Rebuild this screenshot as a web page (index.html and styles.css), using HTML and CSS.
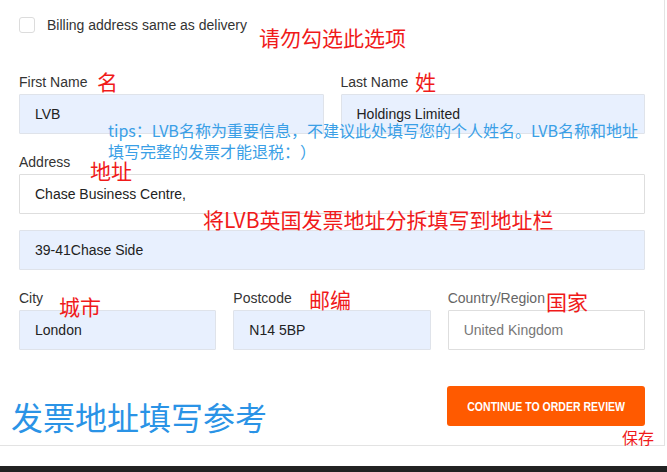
FILE: index.html
```html
<!DOCTYPE html>
<html lang="zh-CN">
<head>
<meta charset="utf-8">
<title>Billing address</title>
<link rel="stylesheet" href="styles.css">
</head>
<body>
<div class="page">
  <form class="card">
    <label class="check-row">
      <span class="checkbox"></span>
      <span class="check-text">Billing address same as delivery</span>
    </label>

    <div class="row two">
      <div class="field">
        <div class="label">First Name</div>
        <div class="input filled">LVB</div>
      </div>
      <div class="field">
        <div class="label">Last Name</div>
        <div class="input filled">Holdings Limited</div>
      </div>
    </div>

    <div class="field">
      <div class="label">Address</div>
      <div class="input">Chase Business Centre,</div>
    </div>
    <div class="field gap-small">
      <div class="input filled">39-41Chase Side</div>
    </div>

    <div class="row three">
      <div class="field">
        <div class="label">City</div>
        <div class="input filled">London</div>
      </div>
      <div class="field">
        <div class="label">Postcode</div>
        <div class="input filled">N14 5BP</div>
      </div>
      <div class="field">
        <div class="label muted">Country/Region</div>
        <div class="input muted-text">United Kingdom</div>
      </div>
    </div>

    <div class="actions">
      <button type="button" class="btn"><span class="btn-text">CONTINUE TO ORDER REVIEW</span></button>
    </div>
  </form>
  <div class="footer"></div>

  <div class="note red n-nocheck">请勿勾选此选项</div>
  <div class="note red n-first">名</div>
  <div class="note red n-last">姓</div>
  <div class="note blue-tip n-tips">tips：LVB名称为重要信息，不建议此处填写您的个人姓名。LVB名称和地址<br>填写完整的发票才能退税：）</div>
  <div class="note red n-addr">地址</div>
  <div class="note red n-split">将LVB英国发票地址分拆填写到地址栏</div>
  <div class="note red n-city">城市</div>
  <div class="note red n-post">邮编</div>
  <div class="note red n-country">国家</div>
  <div class="note blue-big n-ref">发票地址填写参考</div>
  <div class="note red n-save">保存</div>
</div>
</body>
</html>
```
FILE: styles.css
```css
* { box-sizing: border-box; }
html, body { margin: 0; padding: 0; background: #fff; }
body {
  font-family: "Liberation Sans", Arial, sans-serif;
  color: #333;
  width: 667px;
  height: 472px;
  overflow: hidden;
}
.page { position: relative; width: 667px; height: 472px; }

.card {
  width: 665px;
  border-right: 1px solid #e3e3e3;
  border-bottom: 1px solid #e3e3e3;
  padding: 17px 19px 19px 19px;
  display: flex;
  flex-direction: column;
}

.check-row {
  display: flex;
  align-items: center;
  height: 16px;
  margin-bottom: 41px;
}
.checkbox {
  width: 16px;
  height: 16px;
  border: 1px solid #dcdcdc;
  border-radius: 3px;
  background: #fff;
  margin-right: 12px;
  flex: none;
}
.check-text { font-size: 14px; color: #333; }

.row { display: grid; column-gap: 17px; }
.row.two { grid-template-columns: 1fr 1fr; }
.row.three { grid-template-columns: 1fr 1fr 1fr; }

.field { margin-bottom: 20px; }
.field.gap-small { margin-top: -4px; }
.row .field { margin-bottom: 20px; }
.row.three .field { margin-bottom: 36px; }

.label {
  font-size: 14px;
  line-height: 16px;
  height: 16px;
  margin-bottom: 4px;
  color: #333;
}
.label.muted { color: #666; }

.input {
  height: 40px;
  border: 1px solid #dedede;
  background: #fff;
  font-size: 14px;
  color: #222;
  padding: 0 15px;
  display: flex;
  align-items: center;
  border-radius: 1px;
}
.input.filled { background: #e8f0fe; border-color: #dfe3ea; }
.input.muted-text { color: #777; }

.actions { display: flex; justify-content: flex-end; }
.btn {
  width: 198px;
  height: 40px;
  background: #ff5a00;
  border: none;
  border-radius: 3px;
  color: #fff;
  padding: 0;
  display: flex;
  align-items: center;
  justify-content: center;
  overflow: hidden;
}
.btn-text {
  display: inline-block;
  white-space: nowrap;
  font-family: "Liberation Sans", Arial, sans-serif;
  font-weight: bold;
  font-size: 13.5px;
  transform: scaleX(0.78);
  color: #fff;
}

.footer {
  margin-top: 20px;
  height: 6px;
  background: #222;
}

.note {
  position: absolute;
  font-family: "Noto Sans CJK SC", "Liberation Sans", sans-serif;
  white-space: nowrap;
  line-height: 1;
  text-spacing-trim: space-all;
}
.red { color: #f01a1a; font-size: 21px; }
.blue-tip { color: #3a9fe6; font-size: 16px; line-height: 21px; }
.blue-big { color: #2a93e6; font-size: 32px; }

.n-nocheck { left: 259px; top: 27px; }
.n-first { left: 97px; top: 71px; }
.n-last { left: 415px; top: 71px; }
.n-tips { left: 108px; top: 120px; }
.n-addr { left: 90px; top: 160px; }
.n-split { left: 203px; top: 209px; }
.n-city { left: 59px; top: 296px; }
.n-post { left: 309px; top: 289px; }
.n-country { left: 546px; top: 291px; }
.n-ref { left: 11px; top: 400px; }
.n-save { left: 622px; top: 429px; font-size: 16px; }
```
